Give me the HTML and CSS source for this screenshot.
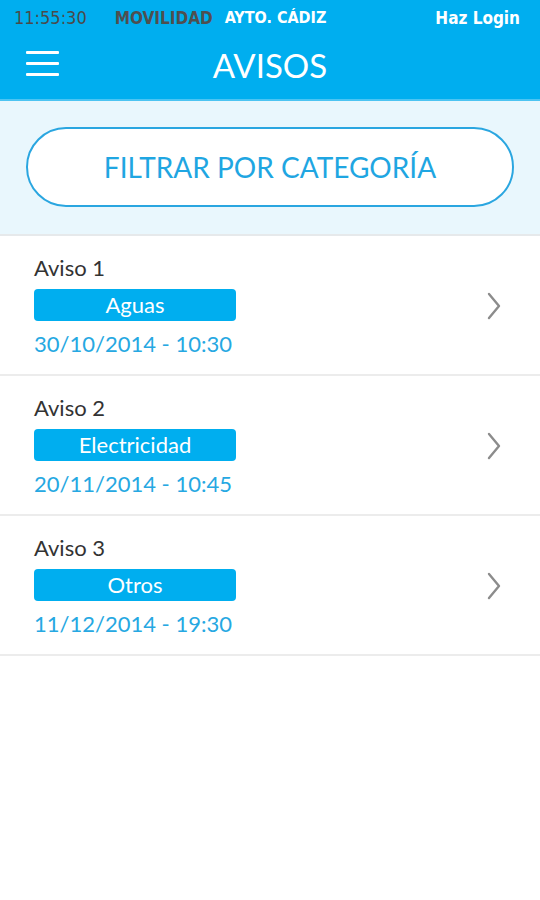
FILE: index.html
```html
<!DOCTYPE html>
<html lang="es">
<head>
    <meta charset="UTF-8">
    <meta name="viewport" content="width=device-width, initial-scale=1.0">
    <title>Avisos</title>
    <link rel="stylesheet" href="styles.css">
</head>
<body>
    <header class="header">
        <div class="status-bar">
            <span class="clock">11:55:30</span>
            <span class="brand-dark">MOVILIDAD</span>
            <span class="brand-light">AYTO. CÁDIZ</span>
            <span class="login">Haz Login</span>
        </div>
        <div class="title-row">
            <button class="menu-btn" aria-label="Menú">
                <span></span><span></span><span></span>
            </button>
            <h1>AVISOS</h1>
        </div>
    </header>

    <div class="filter-area">
        <button class="filter-btn">FILTRAR POR CATEGORÍA</button>
    </div>

    <ul class="avisos">
        <li class="aviso">
            <div class="aviso-info">
                <p class="aviso-title">Aviso 1</p>
                <p class="badge">Aguas</p>
                <p class="aviso-date">30/10/2014 - 10:30</p>
            </div>
            <svg class="chevron" width="16" height="28" viewBox="0 0 16 28"><path d="M3 2 L13 14 L3 26" fill="none" stroke="#8c8c8c" stroke-width="2.4" stroke-linecap="round" stroke-linejoin="round"/></svg>
        </li>
        <li class="aviso">
            <div class="aviso-info">
                <p class="aviso-title">Aviso 2</p>
                <p class="badge">Electricidad</p>
                <p class="aviso-date">20/11/2014 - 10:45</p>
            </div>
            <svg class="chevron" width="16" height="28" viewBox="0 0 16 28"><path d="M3 2 L13 14 L3 26" fill="none" stroke="#8c8c8c" stroke-width="2.4" stroke-linecap="round" stroke-linejoin="round"/></svg>
        </li>
        <li class="aviso">
            <div class="aviso-info">
                <p class="aviso-title">Aviso 3</p>
                <p class="badge">Otros</p>
                <p class="aviso-date">11/12/2014 - 19:30</p>
            </div>
            <svg class="chevron" width="16" height="28" viewBox="0 0 16 28"><path d="M3 2 L13 14 L3 26" fill="none" stroke="#8c8c8c" stroke-width="2.4" stroke-linecap="round" stroke-linejoin="round"/></svg>
        </li>
    </ul>
</body>
</html>
```

FILE: styles.css
```css
body {
    font-family: Lato, 'Open Sans', Arial, sans-serif;
    margin: 0;
    background-color: #fff;
    color: #333;
}
.header {
    background: #00aeef;
    border-bottom: 2px solid #4cc4f2;
}
.status-bar {
    display: flex;
    align-items: center;
    height: 35px;
    padding: 0 20px 0 14px;
    font-family: 'DejaVu Sans Condensed', 'DejaVu Sans', sans-serif;
    font-size: 17px;
}
.clock {
    color: #4a4a4a;
    font-size: 18px;
    margin-right: 28px;
}
.brand-dark {
    color: #4f4f4f;
    font-weight: bold;
    margin-right: 12px;
}
.brand-light {
    color: #fff;
    font-weight: bold;
    font-size: 16px;
}
.login {
    color: #fff;
    font-weight: bold;
    margin-left: auto;
}
.title-row {
    position: relative;
    display: flex;
    align-items: center;
    justify-content: center;
    height: 64px;
    padding-bottom: 4px;
    box-sizing: border-box;
}
.title-row h1 {
    margin: 0;
    color: #fff;
    font-weight: normal;
    font-size: 33px;
}
.menu-btn {
    position: absolute;
    left: 26px;
    top: 16px;
    display: flex;
    flex-direction: column;
    justify-content: space-between;
    width: 33px;
    height: 25px;
    padding: 0;
    border: none;
    background: none;
}
.menu-btn span {
    display: block;
    height: 3px;
    background: #fff;
    border-radius: 1px;
}
.filter-area {
    background: #e9f7fd;
    padding: 26px 26px 27px;
    border-bottom: 2px solid #e6e9eb;
}
.filter-btn {
    display: block;
    width: 100%;
    height: 80px;
    background: #fff;
    border: 2px solid #2aa6e0;
    border-radius: 40px;
    color: #1fa6e2;
    font-family: Lato, 'Open Sans', Arial, sans-serif;
    font-size: 28px;
    padding: 0;
}
.avisos {
    list-style: none;
    margin: 0;
    padding: 0;
}
.aviso {
    display: flex;
    align-items: center;
    justify-content: space-between;
    padding: 18px 38px 16px 34px;
    border-bottom: 2px solid #ececec;
}
.aviso-info p {
    margin: 0;
}
.aviso-title {
    font-size: 22px;
    line-height: 28px;
    color: #333;
}
.badge {
    width: 202px;
    height: 32px;
    margin-top: 7px !important;
    background: #00aeef;
    border-radius: 4px;
    color: #fff;
    font-size: 22px;
    line-height: 32px;
    text-align: center;
}
.aviso-date {
    margin-top: 9px !important;
    font-size: 22px;
    line-height: 28px;
    color: #26a8e2;
}
```
